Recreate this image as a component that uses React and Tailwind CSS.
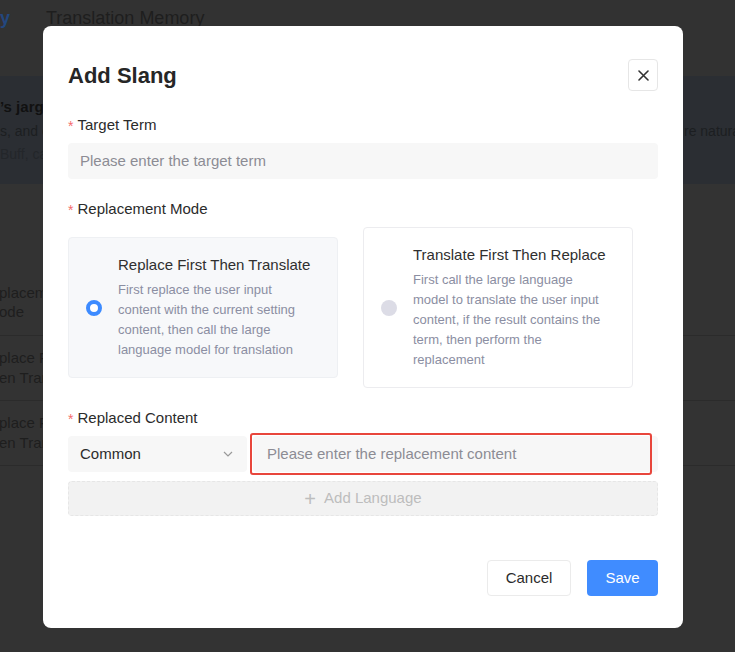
import React from "react";

const font = { fontFamily: '"Liberation Sans", Arial, sans-serif' };

function Label({ children }) {
  return (
    <div className="flex items-center h-[22px] text-[15px] text-[#2b2b2b] mb-[7px]">
      <span className="text-[#f56c6c] mr-[4px] text-[14px] leading-[14px] pt-[2px]">*</span>
      <span>{children}</span>
    </div>
  );
}

function ModeCard({ selected, title, desc }) {
  return (
    <div
      className={
        "w-[270px] flex items-center rounded-[4px] border pl-[17px] py-[17px] " +
        (selected ? "bg-[#f7f8fa] border-[#eef0f3]" : "bg-white border-[#ececef]")
      }
    >
      {selected ? (
        <div className="w-[16px] h-[16px] shrink-0 rounded-full border-[4px] border-[#3d8bff] bg-white" />
      ) : (
        <div className="w-[16px] h-[16px] shrink-0 rounded-full bg-[#dcdce6]" />
      )}
      <div className="ml-[16px] w-[193px] flex flex-col">
        <div className="text-[15px] leading-[20px] text-[#2f2f2f] whitespace-nowrap">{title}</div>
        <div className="mt-[5px] text-[13px] leading-[20px] text-[#8b8ea2]">{desc}</div>
      </div>
    </div>
  );
}

export default function App() {
  return (
    <div className="relative w-[735px] h-[652px] overflow-hidden bg-[#333333]" style={font}>
      {/* dimmed background page */}
      <div className="flex flex-col">
        <div className="h-[76px] bg-[#323232] flex items-start pt-[6px]">
          <span className="text-[18px] leading-[24px] text-[#23477f] font-bold w-[46px]">y</span>
          <span className="text-[18px] leading-[24px] text-[#1e1e1e]">Translation Memory</span>
        </div>
        <div className="h-[108px] bg-[#2b2e33] relative">
          <div className="pt-[19px] text-[15px] leading-[24px] font-bold text-[#111]">’s jargon</div>
          <div className="text-[14px] leading-[24px] text-[#1c1e21] flex justify-between">
            <span>s, and common</span>
            <span className="whitespace-nowrap w-[51px] overflow-hidden">re natural</span>
          </div>
          <div className="text-[14px] leading-[22px] text-[#23262a]">Buff, carry</div>
        </div>
        <div className="h-[152px] flex items-end pb-[14px] border-b border-[#2b2b2b]">
          <div className="text-[15px] leading-[19px] text-[#1e1e1e] -ml-[1px]">
            placement
            <br />
            ode
          </div>
        </div>
        <div className="h-[65px] flex items-center border-b border-[#2b2b2b]">
          <div className="text-[15px] leading-[20px] text-[#1e1e1e] -ml-[1px]">
            place First
            <br />
            en Translate
          </div>
        </div>
        <div className="h-[65px] flex items-center border-b border-[#2b2b2b]">
          <div className="text-[15px] leading-[20px] text-[#1e1e1e] -ml-[1px]">
            place First
            <br />
            en Translate
          </div>
        </div>
      </div>

      {/* modal */}
      <div className="absolute left-[43px] top-[26px] w-[640px] h-[602px] bg-white rounded-[8px] px-[25px] pt-[33px] flex flex-col">
        <div className="flex items-center justify-between h-[32px]">
          <div className="text-[22px] font-bold text-[#262626]">Add Slang</div>
          <button className="w-[30px] h-[32px] rounded-[4px] border border-[#e6e6e6] flex items-center justify-center text-[#333]">
            <svg width="11" height="11" viewBox="0 0 11 11">
              <path d="M1 1 L10 10 M10 1 L1 10" stroke="#333" strokeWidth="1.6" strokeLinecap="round" />
            </svg>
          </button>
        </div>

        <div className="mt-[23px]">
          <Label>Target Term</Label>
          <div className="h-[36px] rounded-[4px] bg-[#f7f7f7] flex items-center px-[12px] text-[15px] text-[#8c8c94]">
            Please enter the target term
          </div>
        </div>

        <div className="mt-[19px]">
          <Label>Replacement Mode</Label>
          <div className="flex items-center gap-[25px]">
            <ModeCard
              selected
              title="Replace First Then Translate"
              desc="First replace the user input content with the current setting content, then call the large language model for translation"
            />
            <ModeCard
              title="Translate First Then Replace"
              desc="First call the large language model to translate the user input content, if the result contains the term, then perform the replacement"
            />
          </div>
        </div>

        <div className="mt-[19px]">
          <Label>Replaced Content</Label>
          <div className="flex gap-[6px] relative">
            <div className="w-[179px] h-[36px] rounded-[4px] bg-[#f7f7f7] flex items-center justify-between px-[12px] text-[15px] text-[#2b2b2b]">
              <span>Common</span>
              <svg width="10" height="6" viewBox="0 0 10 6" className="mr-[2px]">
                <path d="M1 1 L5 5 L9 1" fill="none" stroke="#999" strokeWidth="1.2" />
              </svg>
            </div>
            <div className="flex-1 h-[36px] rounded-[4px] bg-[#f7f7f7] flex items-center pl-[14px] text-[15px] text-[#8c8c94]">
              Please enter the replacement content
            </div>
            <div className="absolute left-[182px] top-[-3px] w-[402px] h-[42px] border-2 border-[#e8463c] rounded-[3px]" />
          </div>
          <div className="mt-[9px] h-[35px] rounded-[4px] bg-[#f2f2f2] border border-dashed border-[#e6e6e6] flex items-center justify-center text-[15px] text-[#bdbdbd]">
            <span className="text-[20px] leading-[20px] mr-[8px] font-light">+</span>
            <span>Add Language</span>
          </div>
        </div>

        <div className="mt-[44px] flex justify-end gap-[16px]">
          <button className="w-[84px] h-[36px] rounded-[4px] border border-[#ebebeb] bg-white text-[15px] text-[#2b2b2b]">
            Cancel
          </button>
          <button className="w-[71px] h-[36px] rounded-[4px] bg-[#408cff] text-[15px] text-white">
            Save
          </button>
        </div>
      </div>
    </div>
  );
}
